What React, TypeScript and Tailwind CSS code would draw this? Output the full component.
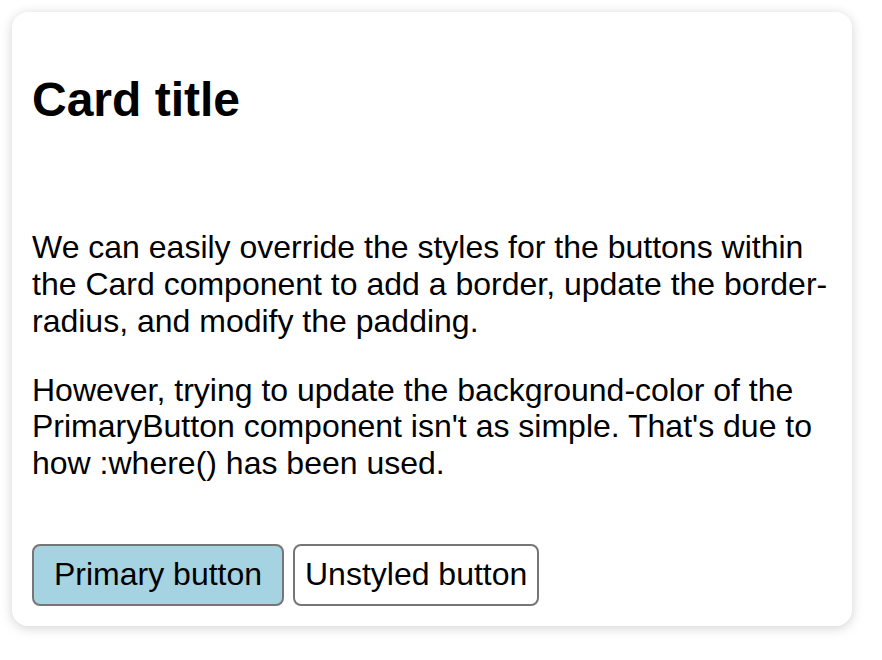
import React from 'react';

const Card: React.FC = () => {
  return (
    <div className="m-3 w-[840px] rounded-2xl bg-white px-5 pt-5 pb-5 shadow-[0_2px_12px_rgba(0,0,0,0.18)] flex flex-col gap-[30px]">
      <h2 className="my-10 text-[48px] font-bold leading-[1.15]">Card title</h2>

      <div>
        <p className="my-8">
          We can easily override the styles for the buttons within the Card component to add a
          border, update the border-radius, and modify the padding.
        </p>
        <p className="my-8">
          However, trying to update the background-color of the PrimaryButton component isn't as
          simple. That's due to how :where() has been used.
        </p>
      </div>

      <div>
        <button className="bg-[#a6d3e1] border-2 border-[#767676] rounded-lg px-5 py-[10.5px] text-[32px] leading-[1.15]">
          Primary button
        </button>{' '}
        <button className="bg-white border-2 border-[#767676] rounded-lg px-[10px] py-[10.5px] text-[32px] leading-[1.15]">
          Unstyled button
        </button>
      </div>
    </div>
  );
};

export default function App() {
  return (
    <div className="min-h-[660px] bg-white pt-px -mt-px text-black text-[32px] leading-[1.15] font-['Liberation_Sans',Arial,sans-serif]">
      <Card />
    </div>
  );
}
